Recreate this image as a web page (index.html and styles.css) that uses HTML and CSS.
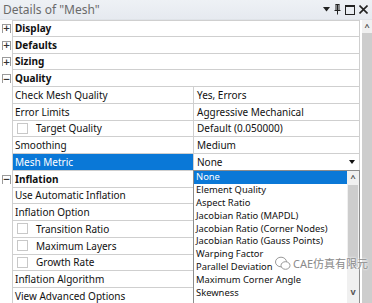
FILE: index.html
```html
<!DOCTYPE html>
<html lang="en">

<head>
    <meta charset="UTF-8">
    <meta name="viewport" content="width=device-width, initial-scale=1.0">
    <title>Details of "Mesh"</title>
    <link rel="stylesheet" href="styles.css">
</head>

<body>
    <div class="panel">
        <div class="titlebar">
            <span class="title">Details of "Mesh"</span>
            <span class="grip"></span>
            <span class="tools">
                <svg width="7" height="5" viewBox="0 0 7 5"><path d="M0 0H7L3.5 4.5Z" fill="#222"/></svg>
                <svg width="7" height="11" viewBox="0 0 7 11"><path d="M1.5 0.5H5.5M2 0.5V6.5M5 0.5V6.5M0.5 6.5H6.5M3.5 6.5V10.5" stroke="#222" fill="none"/><path d="M3.5 1V6" stroke="#222" fill="none"/></svg>
                <svg width="10" height="10" viewBox="0 0 10 10"><rect x="0.5" y="0.5" width="9" height="9" fill="none" stroke="#222"/><path d="M0.5 1.5H9.5" stroke="#222"/></svg>
                <svg width="9" height="9" viewBox="0 0 9 9"><path d="M0.5 0.5L8.5 8.5M8.5 0.5L0.5 8.5" stroke="#222" stroke-width="1.6"/></svg>
            </span>
        </div>

        <div class="body">
            <div class="grid">
                <div class="row group"><span class="tog">+</span><div class="name">Display</div></div>
                <div class="row group"><span class="tog">+</span><div class="name">Defaults</div></div>
                <div class="row group"><span class="tog">+</span><div class="name">Sizing</div></div>
                <div class="row group"><span class="tog">−</span><div class="name">Quality</div></div>
                <div class="row"><span></span><div class="name">Check Mesh Quality</div><div class="value">Yes, Errors</div></div>
                <div class="row"><span></span><div class="name">Error Limits</div><div class="value">Aggressive Mechanical</div></div>
                <div class="row"><span></span><div class="name"><i class="check"></i>Target Quality</div><div class="value">Default (0.050000)</div></div>
                <div class="row"><span></span><div class="name">Smoothing</div><div class="value">Medium</div></div>
                <div class="row"><span></span><div class="name selected">Mesh Metric</div><div class="value combo">None<b class="arrow"></b></div></div>
                <div class="row group"><span class="tog">−</span><div class="name">Inflation</div></div>
                <div class="row"><span></span><div class="name">Use Automatic Inflation</div><div class="value"></div></div>
                <div class="row"><span></span><div class="name">Inflation Option</div><div class="value"></div></div>
                <div class="row"><span></span><div class="name"><i class="check"></i>Transition Ratio</div><div class="value"></div></div>
                <div class="row"><span></span><div class="name"><i class="check"></i>Maximum Layers</div><div class="value"></div></div>
                <div class="row"><span></span><div class="name"><i class="check"></i>Growth Rate</div><div class="value"></div></div>
                <div class="row"><span></span><div class="name">Inflation Algorithm</div><div class="value"></div></div>
                <div class="row"><span></span><div class="name">View Advanced Options</div><div class="value"></div></div>
            </div>
            <div class="vscroll">
                <div class="up">^</div>
                <div class="thumb"></div>
            </div>
        </div>

        <div class="droplist">
            <ul class="items">
                <li class="hot">None</li>
                <li>Element Quality</li>
                <li>Aspect Ratio</li>
                <li>Jacobian Ratio (MAPDL)</li>
                <li>Jacobian Ratio (Corner Nodes)</li>
                <li>Jacobian Ratio (Gauss Points)</li>
                <li>Warping Factor</li>
                <li>Parallel Deviation</li>
                <li>Maximum Corner Angle</li>
                <li>Skewness</li>
            </ul>
            <div class="listscroll">
                <div class="up">^</div>
                <div class="thumb"></div>
                <div class="down">v</div>
            </div>
        </div>

        <div class="watermark">
            <svg width="16" height="15" viewBox="0 0 16 15"><ellipse cx="6" cy="6" rx="5.5" ry="4.8" fill="none" stroke="#999"/><ellipse cx="10.5" cy="9.5" rx="4.5" ry="3.8" fill="#fff" stroke="#999"/></svg>
            <span>CAE仿真有限元</span>
        </div>
    </div>
</body>

</html>
```

FILE: styles.css
```css
body {
    margin: 0;
    background: #fff;
    font-family: "Noto Sans", "Noto Sans CJK SC", sans-serif;
    font-size: 10px;
    color: #111;
}

.panel {
    position: relative;
    width: 372px;
    height: 303px;
    overflow: hidden;
}

.titlebar {
    height: 20px;
    display: flex;
    align-items: center;
    background: linear-gradient(#eef1f5, #e6eaf0);
    box-sizing: border-box;
    border-bottom: 1px solid #dfe3e8;
    padding: 0 4px 0 3px;
}

.title {
    color: #6a6a6a;
    font-size: 12px;
    white-space: nowrap;
}

.grip {
    flex: 1;
    height: 5px;
    margin: 0 7px 0 4px;
    background-image: radial-gradient(#c4c8ce 0.6px, transparent 0.7px);
    background-size: 2px 2px;
}

.tools {
    display: flex;
    align-items: center;
    gap: 4px;
}

.body {
    display: flex;
}

.grid {
    display: grid;
    grid-auto-rows: 16.75px;
    width: 360px;
}

.row {
    display: grid;
    grid-template-columns: 12px 181px 167px;
}

.row.group {
    grid-template-columns: 12px 348px;
}

.row > * {
    box-sizing: border-box;
    display: flex;
    align-items: center;
    border-bottom: 1px solid #cfcfcf;
    white-space: nowrap;
    overflow: hidden;
}

.row > span {
    border-bottom: none;
    justify-content: center;
}

.grid .row:first-child > div {
    border-top: 1px solid #cfcfcf;
}

.name {
    border-left: 1px solid #cfcfcf;
    padding-left: 2px;
}

.group .name {
    font-weight: bold;
    border-right: 1px solid #cfcfcf;
}

.value {
    border-left: 1px solid #cfcfcf;
    border-right: 1px solid #cfcfcf;
    padding-left: 3px;
}

.tog {
    margin-left: 2px;
    width: 9px;
    height: 9px;
    align-self: center;
    box-sizing: border-box;
    border: 1px solid #9a9a9a;
    font-size: 9px;
    line-height: 7px;
    color: #333;
    font-family: "DejaVu Sans", sans-serif;
    font-weight: bold;
}

.check {
    width: 9px;
    height: 9px;
    border: 1px solid #c8c8c8;
    margin: 0 8px 0 2px;
}

.selected {
    background: #0a78d7;
    color: #fff;
}

.combo {
    position: relative;
    justify-content: space-between;
    padding-right: 4px;
}

.arrow {
    width: 0;
    height: 0;
    border-left: 3.5px solid transparent;
    border-right: 3.5px solid transparent;
    border-top: 4px solid #111;
}

.vscroll {
    width: 10px;
    margin-left: 2px;
    display: flex;
    flex-direction: column;
    background: #e8e8e8;
}

.vscroll .up {
    height: 13px;
    background: #f0f0f0;
    text-align: center;
    font-size: 9px;
    font-weight: bold;
    line-height: 14px;
    color: #555;
}

.vscroll .thumb {
    flex: 1;
    background: #cdcdcd;
}

.droplist {
    position: absolute;
    left: 193px;
    top: 170px;
    width: 167px;
    height: 140px;
    box-sizing: border-box;
    border: 1px solid #8c8c8c;
    background: #fff;
    display: flex;
}

.items {
    list-style: none;
    margin: 0;
    padding: 0;
    flex: 1;
    font-size: 9.4px;
}

.items li {
    height: 12.9px;
    line-height: 12.9px;
    padding-left: 2px;
    white-space: nowrap;
}

.items .hot {
    background: #0a78d7;
    color: #fff;
}

.listscroll {
    width: 12px;
    display: flex;
    flex-direction: column;
    background: #f0f0f0;
}

.listscroll .up,
.listscroll .down {
    height: 14px;
    text-align: center;
    font-size: 9px;
    font-weight: bold;
    line-height: 14px;
    color: #555;
}

.listscroll .thumb {
    height: 82px;
    margin: 0 1px;
    background: #cdcdcd;
}

.listscroll .down {
    margin-top: auto;
    margin-bottom: 10px;
}

.watermark {
    position: absolute;
    left: 275px;
    top: 255px;
    display: flex;
    align-items: center;
    gap: 2px;
    color: #8a8a8a;
    font-size: 11px;
    text-shadow: 0 0 2px #fff, 0 0 3px #fff;
    white-space: nowrap;
}
```
